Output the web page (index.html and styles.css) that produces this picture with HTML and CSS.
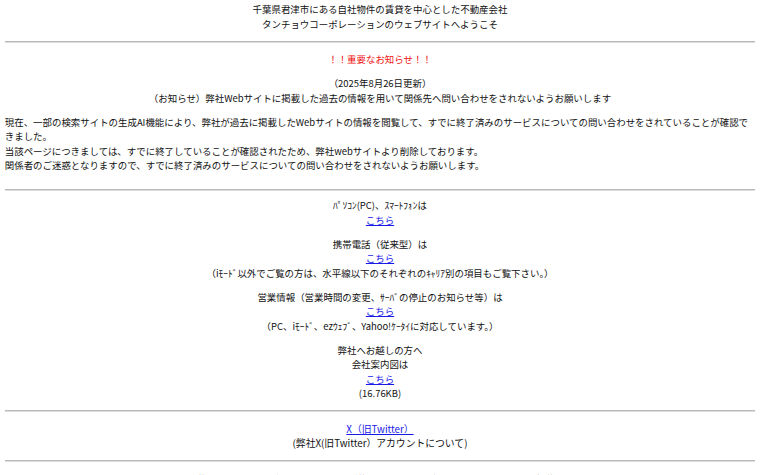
FILE: index.html
```html
<!DOCTYPE html>
<html lang="ja">
<head>
<meta charset="utf-8">
<title>タンチョウコーポレーション</title>
<link rel="stylesheet" href="styles.css">
</head>
<body>
<div class="intro">千葉県君津市にある自社物件の賃貸を中心とした不動産会社<br>タンチョウコーポレーションのウェブサイトへようこそ</div>
<hr class="rule">
<section class="notice">
<p class="alert">！！重要なお知らせ！！</p>
<p class="center">（2025年8月26日更新）<br>（お知らせ）弊社Webサイトに掲載した過去の情報を用いて関係先へ問い合わせをされないようお願いします</p>
<p class="notice-body">現在、一部の検索サイトの生成AI機能により、弊社が過去に掲載したWebサイトの情報を閲覧して、すでに終了済みのサービスについての問い合わせをされていることが確認できました。<br>当該ページにつきましては、すでに終了していることが確認されたため、弊社webサイトより削除しております。<br>関係者のご迷惑となりますので、すでに終了済みのサービスについての問い合わせをされないようお願いします。</p>
</section>
<hr class="rule">
<section class="links">
<p class="center">ﾊﾟｿｺﾝ(PC)、ｽﾏｰﾄﾌｫﾝは<br><a href="#">こちら</a></p>
<p class="center">携帯電話（従来型）は<br><a href="#">こちら</a><br>（iﾓｰﾄﾞ以外でご覧の方は、水平線以下のそれぞれのｷｬﾘｱ別の項目もご覧下さい。）</p>
<p class="center">営業情報（営業時間の変更、ｻｰﾊﾞの停止のお知らせ等）は<br><a href="#">こちら</a><br>（PC、iﾓｰﾄﾞ、ezｳｪﾌﾞ、Yahoo!ｹｰﾀｲに対応しています。）</p>
<p class="center">弊社へお越しの方へ<br>会社案内図は<br><a href="#">こちら</a><br>(16.76KB)</p>
</section>
<hr class="rule">
<p class="center social"><a href="#">X（旧Twitter）</a><br>(弊社X(旧Twitter）アカウントについて)</p>
<hr class="rule">
<p class="center">入居者募集要項を定めた物件（主に店舗）が募集開始となった場合、本トップページに掲載します。</p>
</body>
</html>
```
FILE: styles.css
```css
html {
  background: #fff;
}
body {
  margin: 2px 4.75px;
  font-family: "Noto Sans CJK JP", "Noto Sans", sans-serif;
  font-size: 9.45px;
  line-height: 14.5px;
  color: #111;
}
.intro {
  text-align: center;
}
.rule {
  border: none;
  border-top: 1px solid #b8b8b8;
  border-bottom: 1px solid #dedede;
  height: 0;
  margin: 9.5px 0;
}
p {
  margin: 9.5px 0;
}
.center {
  text-align: center;
}
.alert {
  color: #f01010;
  text-align: center;
}
.notice-body {
  text-align: left;
  margin-bottom: 16.5px;
}
.links {
  margin-top: -2.5px;
}
a {
  color: #1a1ae6;
  text-decoration: underline;
}
.social {
  font-size: 9.8px;
  margin-bottom: 6px;
}
```
